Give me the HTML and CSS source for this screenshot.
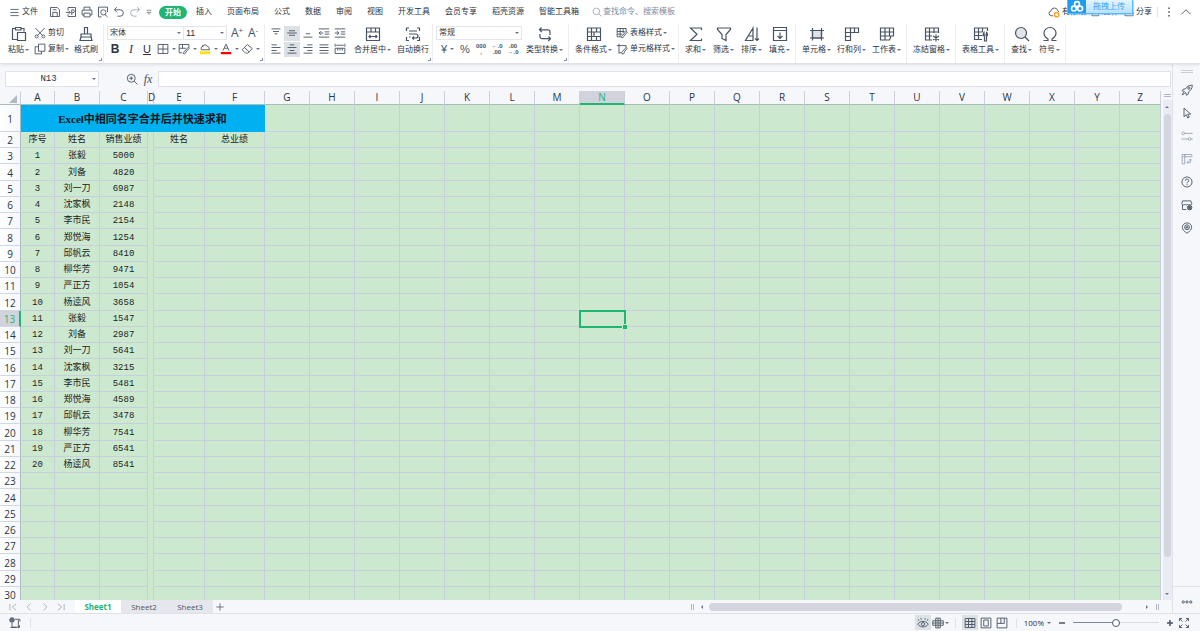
FILE: index.html
```html
<!DOCTYPE html>
<html lang="zh-CN">
<head>
<meta charset="utf-8">
<meta name="viewport" content="width=device-width, initial-scale=1">
<title>表格</title>
<link rel="stylesheet" href="styles.css">
</head>
<body>
<svg class="sprite" aria-hidden="true">
  <symbol id="i-menu" viewBox="0 0 16 16"><path d="M2 3.500h12M2 8h12M2 12.500h12"/></symbol>
  <symbol id="i-save" viewBox="0 0 16 16"><path d="M2 2h9l3 3v9H2zM5 14V8.500h6V14M5 5h5"/></symbol>
  <symbol id="i-export" viewBox="0 0 16 16"><path d="M4 6V2h10v12H4v-3M1 8.500h6M5 6.500l2 2-2 2M9 12V5h1.500a2 2 0 0 1 0 4H9"/></symbol>
  <symbol id="i-print" viewBox="0 0 16 16"><path d="M4 5.500V1.500h8v4M4 12H1.500V5.500h13V12H12M4 9.500h8v5H4z"/></symbol>
  <symbol id="i-preview" viewBox="0 0 16 16"><path d="M6 14.500H2v-13h12V8M10.500 11.500l3.500 3"/><circle cx="8.500" cy="8.500" r="3.500"/></symbol>
  <symbol id="i-undo" viewBox="0 0 16 16"><path d="M5 1.500L2 5l3.500 3.500M2 5h7.500a4.300 4.300 0 0 1 0 8.600H6"/></symbol>
  <symbol id="i-redo" viewBox="0 0 16 16"><path d="M11 1.500L14 5l-3.500 3.500M14 5H6.500a4.300 4.300 0 0 0 0 8.600H10"/></symbol>
  <symbol id="i-more" viewBox="0 0 16 16"><path d="M3 4.500h10M4 8.500l4 4 4-4z"/></symbol>
  <symbol id="i-search" viewBox="0 0 16 16"><circle cx="7" cy="7" r="5.300"/><path d="M11 11l4 4"/></symbol>
  <symbol id="i-cloud" viewBox="0 0 16 16"><path d="M7 13H4.500a3.300 3.300 0 0 1-.5-6.500 4.500 4.500 0 0 1 8.800-.5 3 3 0 0 1 1.700 2"/><circle cx="11.500" cy="11.500" r="2.800" stroke="#f5a623" stroke-width="2"/></symbol>
  <symbol id="i-collab" viewBox="0 0 16 16"><circle cx="7" cy="5" r="3"/><path d="M1.500 14c0-3 2-5 5.500-5s5.500 2 5.500 5z"/></symbol>
  <symbol id="i-share" viewBox="0 0 16 16"><path d="M4 8H1.500v6h13V8M5 10c.5-3.500 3-5 7-5M9.500 2.500L12.500 5l-3 2.500"/></symbol>
  <symbol id="i-dots" viewBox="0 0 16 16"><path d="M8 2v2M8 7v2M8 12v2" stroke-width="2"/></symbol>
  <symbol id="i-up" viewBox="0 0 16 16"><path d="M2 11l6-6 6 6"/></symbol>

  <symbol id="i-paste" viewBox="0 0 16 16"><path d="M6 13.500H1.500v-11h3M10 2.500h3v3M4.500 1.500h5.500v2.500H4.500zM6.500 6.500h8v8h-8z"/></symbol>
  <symbol id="i-cut" viewBox="0 0 16 16"><path d="M2 1.500l9.500 10M14 1.500L4.500 11.500"/><circle cx="3.500" cy="12.500" r="2"/><circle cx="12.500" cy="12.500" r="2"/></symbol>
  <symbol id="i-copy" viewBox="0 0 16 16"><path d="M6 1.500h8.500v9.500H6zM6 5H1.500v9.500H10V11"/></symbol>
  <symbol id="i-brush" viewBox="0 0 16 16"><path d="M6.500 8V1.500h3V8M3 11V8h10v3M3 11L2 14.500h12l-1-3.500M3 11h10"/></symbol>
  <symbol id="i-border" viewBox="0 0 16 16"><path d="M1.500 2h13v12h-13zM8 2v12M1.500 8h13"/></symbol>
  <symbol id="i-tstyle" viewBox="0 0 16 16"><path d="M6 13H1.500V2h12v4M1.500 6h10M1.500 9.500h7M5.500 2v11M9.500 2v6M7 14c2.500 1 3.500-.5 3.500-2L15 7l-1.500-1.200L9 11c-1.500.3-1.500 2-2 3z"/></symbol>
  <symbol id="i-pen" viewBox="0 0 16 16"><path d="M5.500 13H1.500V2h13v4M1.500 7h9M6 2v5M7 14c2.500 1 3.500-.5 3.500-2L15 7l-1.500-1.200L9 11c-1.500.3-1.500 2-2 3z"/></symbol>
  <symbol id="i-fill" viewBox="0 0 16 16"><path d="M3 9V6l5-4 5.500 4v3.500M3 9h10.500M5 5V2.500"/><path d="M1 13h14" stroke="#f5e61a" stroke-width="4"/></symbol>
  <symbol id="i-color" viewBox="0 0 16 16"><path d="M4 10l4-8.500L12 10M5.500 7h5"/><path d="M1 13.500h14" stroke="#f00" stroke-width="3"/></symbol>
  <symbol id="i-erase" viewBox="0 0 16 16"><path d="M8.500 2L15 7.500 9 13.500H6L1.500 9zM4.500 6l6.500 6"/></symbol>
  <symbol id="i-vtop" viewBox="0 0 16 16"><path d="M2 2.500h12M4 6h8M6 9h4"/></symbol>
  <symbol id="i-vmid" viewBox="0 0 16 16"><path d="M4 5h8M1.500 8h13M4 11h8"/></symbol>
  <symbol id="i-vbot" viewBox="0 0 16 16"><path d="M5 9h6M2 13.500h12"/></symbol>
  <symbol id="i-outdent" viewBox="0 0 16 16"><path d="M1 2.500h14M9 6.500h6M9 9.500h6M1 13.500h14M7 8H1.500M4 5.500L1.500 8 4 10.500"/></symbol>
  <symbol id="i-indent" viewBox="0 0 16 16"><path d="M1 2.500h14M9 6.500h6M9 9.500h6M1 13.500h14M1 8h5.500M4 5.500L6.500 8 4 10.500"/></symbol>
  <symbol id="i-left" viewBox="0 0 16 16"><path d="M2 2.500h7M2 6h12M2 10h7M2 13.500h12"/></symbol>
  <symbol id="i-center" viewBox="0 0 16 16"><path d="M5 2.500h6M2 6h12M5 10h6M2 13.500h12"/></symbol>
  <symbol id="i-right" viewBox="0 0 16 16"><path d="M7 2.500h7M2 6h12M7 10h7M2 13.500h12"/></symbol>
  <symbol id="i-just" viewBox="0 0 16 16"><path d="M2 2.500h12M2 6h12M2 10h12M2 13.500h12"/></symbol>
  <symbol id="i-dist" viewBox="0 0 16 16"><path d="M1.500 1v4M14.500 1v4M3 3h10M1.500 7h13v7h-13zM5 7v3M8 7v3M11 7v3"/></symbol>
  <symbol id="i-merge" viewBox="0 0 16 16"><path d="M1.500 2h13v12.500h-13zM1.500 6h13M6 2v4M10.500 2v4M4 10.500h8M5.500 9L4 10.500 5.500 12M10.500 9l1.500 1.500-1.500 1.500"/></symbol>
  <symbol id="i-wrap" viewBox="0 0 16 16"><path d="M1.500 5V2H4M12 2h2.500v3M1.500 11v3.500H4M12 14.500h2.500V11M4 5h8M4 8h7a2 2 0 0 1 0 4H7.500M9 10.500L7.500 12 9 13.500M4 11h1.500"/></symbol>
  <symbol id="i-convert" viewBox="0 0 16 16"><path d="M4.500 1.500L2.500 3.800 4.800 6M2.500 3.800H11a2 2 0 0 1 2 2V9M11.500 10.500l2 2.200-2.300 2.300M13.500 12.700H5a2 2 0 0 1-2-2V8"/></symbol>
  <symbol id="i-cond" viewBox="0 0 16 16"><path d="M1.500 2h13v12.500h-13zM1.500 6h13M1.500 10.500h13M5.500 2v12.500M10.500 2v4M10.500 10.500v4M8 6v4.500"/></symbol>
  <symbol id="i-cstyle" viewBox="0 0 16 16"><path d="M4 1v13M1 3.500h13M4 13h3M13 3.500v2M8 14.500c2.500.5 3.500-1 3-2.500L15 7l-1.500-1.200L9 11c-1.500.5-1.500 2-1 3.500z"/></symbol>
  <symbol id="i-sum" viewBox="0 0 16 16"><path d="M13.500 4V2H2.500L9 8.300 2.500 14.500h11v-2"/></symbol>
  <symbol id="i-filter" viewBox="0 0 16 16"><path d="M1.500 2h13v1.500L10 8.500v6L6 12.500v-4L1.500 3.500z"/></symbol>
  <symbol id="i-sort" viewBox="0 0 16 16"><path d="M9 2L1.500 14.500H9zM4.500 10H9M13 1.500v13M11 12.500l2 2 2-2"/></symbol>
  <symbol id="i-down" viewBox="0 0 16 16"><path d="M1.500 1.500h13v13h-13zM1.500 4.500h13M8 6.500v6M5.500 10L8 12.500l2.500-2.500"/></symbol>
  <symbol id="i-cell" viewBox="0 0 16 16"><path d="M3.500 4.500h9v7.500h-9z" fill="#dfe3e8"/><path d="M1 4.500h14M1 12h14M3.500 2v12.500M12.500 2v12.500"/></symbol>
  <symbol id="i-rowcol" viewBox="0 0 16 16"><path d="M1.500 2h13v4.500h-8v8h-5zM6.500 2v4.500M10.500 2v4.500M1.500 6.500h5M1.500 10.500h5"/></symbol>
  <symbol id="i-sheet" viewBox="0 0 16 16"><path d="M1.500 2h13v8H12l-1.500 4H1.500zM1.500 6h13M1.500 10H12M6 2v12M10.500 2v8"/></symbol>
  <symbol id="i-freeze" viewBox="0 0 16 16"><path d="M8 14H1.500V2h13v5M1.500 6h13M1.500 10H8M5.500 2v12M10 2v5M12 8.500v7M9 10l6 4M15 10l-6 4"/></symbol>
  <symbol id="i-tool" viewBox="0 0 16 16"><path d="M9 13.500H1.500V2h13v3M1.500 6h8M1.500 9.500h8M5.500 2v11.500M9.500 2v4M11.500 15v-4.500a2.500 2.500 0 0 1-.5-4v2.500h2.500V6.500a2.500 2.500 0 0 1 0 4V15z"/></symbol>
  <symbol id="i-find" viewBox="0 0 16 16"><circle cx="7" cy="7" r="5.500" fill="#e1e5ea"/><path d="M11 11l4 4"/></symbol>
  <symbol id="i-omega" viewBox="0 0 16 16"><path d="M1.500 14.500h4.500v-1.500C3.500 11.500 2 10 2 7a6 5.500 0 0 1 12 0c0 3-1.500 4.500-4 6v1.500h4.500"/></symbol>
  <symbol id="i-zoomin" viewBox="0 0 16 16"><circle cx="7" cy="7" r="5.300"/><path d="M11 11l4 4M4.500 7h5M7 4.500v5"/></symbol>

  <symbol id="i-rocket" viewBox="0 0 16 16"><path d="M15 1.500c-5 0-7 2-9 5L3 7 1.500 9l3 1 2 2 1 3L9.500 13.500l.5-3c3-2 5-4 5-9zM3.500 11l-2 3.500 3.500-2"/><circle cx="10.500" cy="5.500" r="1.500"/></symbol>
  <symbol id="i-cursor" viewBox="0 0 16 16"><path d="M4 1.500v11.500l3-2.800 2 4.500 2-1-2-4.200h4z"/></symbol>
  <symbol id="i-sliders" viewBox="0 0 16 16"><circle cx="3" cy="4.500" r="1.800"/><circle cx="11.500" cy="12" r="1.800"/><path d="M5 4.500h10.500M.5 12h9M13.500 12h2"/></symbol>
  <symbol id="i-trans" viewBox="0 0 16 16"><path d="M1.500 2h3.500v3H1.500zM5 2h9.500v3H5zM1.500 5v9.500H5V5M8.500 12.500h4V8M10.500 10l2-2 2 2M10 10.500l-2 2 2 2"/></symbol>
  <symbol id="i-help" viewBox="0 0 16 16"><circle cx="8" cy="8" r="6.700"/><path d="M5.800 6.300a2.200 2.200 0 1 1 3 2c-.6.300-.8.700-.8 1.500M8 11v1.300"/></symbol>
  <symbol id="i-shop" viewBox="0 0 16 16"><path d="M7 14H2V8M2 2.500h11l1.500 4c-1 2-2.500 1.500-3 .5-1 1.500-2.500 1.500-3 0-1 1.500-2.500 1.500-3.200 0C4 8.500 2 8 1 6.500z"/><circle cx="11.500" cy="11.500" r="3" fill="#7b8696"/><path d="M11.500 10v3M10 11.500h3"/></symbol>
  <symbol id="i-pin" viewBox="0 0 16 16"><path d="M8 15C4 12 1.800 10 1.800 7a6.200 5.800 0 0 1 12.400 0c0 3-2.200 5-6.200 8z"/><circle cx="8" cy="7" r="3.200"/><path d="M8 5v4M6 7h4"/></symbol>
  <symbol id="i-ellipsis" viewBox="0 0 16 16"><circle cx="3" cy="8" r="1.500"/><circle cx="8" cy="8" r="1.500"/><circle cx="13" cy="8" r="1.500"/></symbol>

  <symbol id="i-first" viewBox="0 0 16 16"><path d="M3 3v10M13 3L7 8l6 5"/></symbol>
  <symbol id="i-prev" viewBox="0 0 16 16"><path d="M10.500 2.500L5 8l5.500 5.500"/></symbol>
  <symbol id="i-next" viewBox="0 0 16 16"><path d="M5.500 2.500L11 8l-5.500 5.500"/></symbol>
  <symbol id="i-last" viewBox="0 0 16 16"><path d="M13 3v10M3 3l6 5-6 5"/></symbol>
  <symbol id="i-plus" viewBox="0 0 16 16"><path d="M8 2v12M2 8h12"/></symbol>
  <symbol id="i-minus" viewBox="0 0 16 16"><path d="M2 8h12"/></symbol>
  <symbol id="i-macro" viewBox="0 0 16 16"><path d="M8 3h6.500v3M12.500 4v9.500H4V8M2 14h8M14 11v3h-2"/><circle cx="4" cy="4" r="3" fill="#6a7585"/></symbol>
  <symbol id="i-eye" viewBox="0 0 16 16"><path d="M1 9.500c3.500-5 10.500-5 14 0-3.500 5-10.500 5-14 0zM2.500 5L1.500 3M5.500 3.500L5 1.500M10.500 3.500l.5-2M13.500 5l1-2"/><circle cx="8" cy="9.500" r="2.200"/></symbol>
  <symbol id="i-cross" viewBox="0 0 16 16"><path d="M1 5h14v6H1zM5 1.500h6v13H5zM8 1.500v13M1 8h14"/></symbol>
  <symbol id="i-grid" viewBox="0 0 16 16"><path d="M1.500 2h13v12h-13zM1.500 6h13M1.500 10h13M6 2v12M10.500 2v12"/></symbol>
  <symbol id="i-page" viewBox="0 0 16 16"><path d="M1.500 1.500h13v13h-13zM5 4h6v8H5z"/></symbol>
  <symbol id="i-break" viewBox="0 0 16 16"><path d="M1.500 1.500h13v13h-13zM1.500 8.500H11V1.500M6.500 8.500v-7"/></symbol>
  <symbol id="i-full" viewBox="0 0 16 16"><path d="M2 5.500V2h3.500M2 2l4 4M10.500 2H14v3.500M14 2l-4 4M2 10.500V14h3.500M2 14l4-4M14 10.500V14h-3.500M14 14l-4-4"/></symbol>
  <symbol id="i-pan" viewBox="0 0 16 16"><circle cx="8" cy="5" r="3"/><circle cx="4.200" cy="10.500" r="3"/><circle cx="11.800" cy="10.500" r="3"/></symbol>
</svg>

<header class="chrome">
  <nav class="menubar" aria-label="菜单">
    <button class="file"><svg class="ic s11"><use href="#i-menu"/></svg>文件</button>
    <div class="quick">
      <button aria-label="保存"><svg class="ic s12"><use href="#i-save"/></svg></button>
      <button aria-label="输出"><svg class="ic s12"><use href="#i-export"/></svg></button>
      <button aria-label="打印"><svg class="ic s12"><use href="#i-print"/></svg></button>
      <button aria-label="打印预览"><svg class="ic s12"><use href="#i-preview"/></svg></button>
      <button aria-label="撤销"><svg class="ic s12"><use href="#i-undo"/></svg></button>
      <button aria-label="恢复" class="faint"><svg class="ic s12"><use href="#i-redo"/></svg></button>
      <button aria-label="更多"><svg class="ic s8"><use href="#i-more"/></svg></button>
    </div>
    <button class="pill">开始</button>
    <div class="tabs">
      <button>插入</button><button>页面布局</button><button>公式</button><button>数据</button><button>审阅</button><button>视图</button><button>开发工具</button><button>会员专享</button><button>稻壳资源</button><button>智能工具箱</button>
    </div>
    <label class="search"><svg class="ic s10"><use href="#i-search"/></svg><input type="text" placeholder="查找命令、搜索模板" aria-label="查找命令"></label>
    <div class="account">
      <button><svg class="ic s12"><use href="#i-cloud"/></svg>有修改</button>
      <button><svg class="ic s10"><use href="#i-collab"/></svg>协作</button>
      <button><svg class="ic s10"><use href="#i-share"/></svg>分享</button>
      <span class="bar"></span>
      <button aria-label="选项"><svg class="ic s12"><use href="#i-dots"/></svg></button>
      <button aria-label="收起功能区"><svg class="ic s12"><use href="#i-up"/></svg></button>
    </div>
    <button class="upload"><span class="upload-logo"><svg class="ic s16"><use href="#i-pan"/></svg></span><span class="upload-text">拖拽上传</span></button>
  </nav>

  <div class="ribbon">
    <section class="group clip">
      <button class="big"><svg class="ic s16"><use href="#i-paste"/></svg><span class="caret">粘贴</span></button>
      <div class="stack">
        <button class="small"><svg class="ic s12"><use href="#i-cut"/></svg>剪切</button>
        <button class="small"><svg class="ic s12"><use href="#i-copy"/></svg><span class="caret">复制</span></button>
      </div>
      <button class="big"><svg class="ic s16"><use href="#i-brush"/></svg><span>格式刷</span></button>
      <i class="launch"></i>
    </section>
    <section class="group tight">
      <div class="stack">
        <div class="line">
          <span class="pick font"><select aria-label="字体"><option>宋体</option></select></span>
          <span class="pick size"><select aria-label="字号"><option>11</option></select></span>
          <span class="after"><button class="tool letter" aria-label="增大字号">A<sup>+</sup></button><button class="tool letter" aria-label="减小字号">A<sup>-</sup></button></span>
        </div>
        <div class="line">
          <button class="tool bold">B</button><button class="tool ital">I</button><button class="tool under">U</button>
          <button class="tool caret" aria-label="边框"><svg class="ic s12"><use href="#i-border"/></svg></button>
          <button class="tool caret" aria-label="单元格样式"><svg class="ic s12"><use href="#i-pen"/></svg></button>
          <button class="tool caret" aria-label="填充颜色"><svg class="ic s12"><use href="#i-fill"/></svg></button>
          <button class="tool caret" aria-label="字体颜色"><svg class="ic s12"><use href="#i-color"/></svg></button>
          <button class="tool caret" aria-label="清除"><svg class="ic s12"><use href="#i-erase"/></svg></button>
        </div>
      </div>
      <i class="launch"></i>
    </section>
    <section class="group tight align">
      <div class="stack">
        <div class="line">
          <button class="tool" aria-label="顶端对齐"><svg class="ic s12"><use href="#i-vtop"/></svg></button><button class="tool on" aria-label="垂直居中"><svg class="ic s12"><use href="#i-vmid"/></svg></button><button class="tool" aria-label="底端对齐"><svg class="ic s12"><use href="#i-vbot"/></svg></button><button class="tool" aria-label="减少缩进"><svg class="ic s12"><use href="#i-outdent"/></svg></button><button class="tool" aria-label="增加缩进"><svg class="ic s12"><use href="#i-indent"/></svg></button>
        </div>
        <div class="line">
          <button class="tool" aria-label="左对齐"><svg class="ic s12"><use href="#i-left"/></svg></button><button class="tool on" aria-label="居中"><svg class="ic s12"><use href="#i-center"/></svg></button><button class="tool" aria-label="右对齐"><svg class="ic s12"><use href="#i-right"/></svg></button><button class="tool" aria-label="两端对齐"><svg class="ic s12"><use href="#i-just"/></svg></button><button class="tool" aria-label="分散对齐"><svg class="ic s12"><use href="#i-dist"/></svg></button>
        </div>
      </div>
      <button class="big"><svg class="ic s16"><use href="#i-merge"/></svg><span class="caret">合并居中</span></button>
      <button class="big"><svg class="ic s16"><use href="#i-wrap"/></svg><span>自动换行</span></button>
      <i class="launch"></i>
    </section>
    <section class="group tight number">
      <div class="stack">
        <div class="line"><span class="pick format"><select aria-label="数字格式"><option>常规</option></select></span></div>
        <div class="line">
          <button class="tool caret yen">¥</button><button class="tool yen">%</button><button class="tool digits"><span>000<br>,</span></button><button class="tool digits"><span>←.0<br>.00</span></button><button class="tool digits"><span>.00<br>→.0</span></button>
        </div>
      </div>
      <button class="big"><svg class="ic s16"><use href="#i-convert"/></svg><span class="caret">类型转换</span></button>
      <i class="launch"></i>
    </section>
    <section class="group styles">
      <button class="big"><svg class="ic s16"><use href="#i-cond"/></svg><span class="caret">条件格式</span></button>
      <div class="stack">
        <button class="small"><svg class="ic s12"><use href="#i-tstyle"/></svg><span class="caret">表格样式</span></button>
        <button class="small"><svg class="ic s12"><use href="#i-cstyle"/></svg><span class="caret">单元格样式</span></button>
      </div>
    </section>
    <section class="group wide">
      <button class="big"><svg class="ic s16"><use href="#i-sum"/></svg><span class="caret">求和</span></button>
      <button class="big"><svg class="ic s16"><use href="#i-filter"/></svg><span class="caret">筛选</span></button>
      <button class="big"><svg class="ic s16"><use href="#i-sort"/></svg><span class="caret">排序</span></button>
      <button class="big"><svg class="ic s16"><use href="#i-down"/></svg><span class="caret">填充</span></button>
    </section>
    <section class="group">
      <button class="big"><svg class="ic s16"><use href="#i-cell"/></svg><span class="caret">单元格</span></button>
      <button class="big"><svg class="ic s16"><use href="#i-rowcol"/></svg><span class="caret">行和列</span></button>
      <button class="big"><svg class="ic s16"><use href="#i-sheet"/></svg><span class="caret">工作表</span></button>
    </section>
    <section class="group">
      <button class="big"><svg class="ic s16"><use href="#i-freeze"/></svg><span class="caret">冻结窗格</span></button>
    </section>
    <section class="group">
      <button class="big"><svg class="ic s16"><use href="#i-tool"/></svg><span class="caret">表格工具</span></button>
    </section>
    <section class="group wide">
      <button class="big"><svg class="ic s16"><use href="#i-find"/></svg><span class="caret">查找</span></button>
      <button class="big"><svg class="ic s16"><use href="#i-omega"/></svg><span class="caret">符号</span></button>
    </section>
  </div>
</header>

<div class="body">
  <main class="work">
    <div class="formula">
      <span class="namebox"><input type="text" value="N13" aria-label="名称框"></span>
      <button class="lens" aria-label="放大"><svg class="ic s12"><use href="#i-zoomin"/></svg></button>
      <button class="fx">fx</button>
      <input class="expr" type="text" aria-label="编辑栏">
    </div>
    <div class="view">
      <div class="cells"><table class="sheet" id="sheet"></table></div>
      <div class="vscroll"><span class="grip"></span><i class="tri up"></i><span class="thumb"></span><i class="tri down"></i></div>
    </div>
    <div class="sheetbar">
      <div class="nav">
        <button aria-label="第一个"><svg class="ic s10"><use href="#i-first"/></svg></button><button aria-label="上一个"><svg class="ic s10"><use href="#i-prev"/></svg></button><button aria-label="下一个"><svg class="ic s10"><use href="#i-next"/></svg></button><button aria-label="最后一个"><svg class="ic s10"><use href="#i-last"/></svg></button>
      </div>
      <button class="stab current">Sheet1</button><button class="stab">Sheet2</button><button class="stab">Sheet3</button>
      <button class="add" aria-label="新建工作表"><svg class="ic s10"><use href="#i-plus"/></svg></button>
      <div class="hscroll"><span class="grip"></span><i class="tri left"></i><span class="thumb"></span><i class="tri right"></i><span class="grip"></span></div>
    </div>
  </main>
  <aside class="side">
    <span class="handle"></span>
    <button aria-label="快捷"><svg class="ic s12"><use href="#i-rocket"/></svg></button>
    <button aria-label="选择"><svg class="ic s12"><use href="#i-cursor"/></svg></button>
    <button aria-label="属性" class="faint"><svg class="ic s12"><use href="#i-sliders"/></svg></button>
    <button aria-label="转换" class="faint"><svg class="ic s12"><use href="#i-trans"/></svg></button>
    <button aria-label="帮助"><svg class="ic s12"><use href="#i-help"/></svg></button>
    <button aria-label="素材"><svg class="ic s12"><use href="#i-shop"/></svg></button>
    <button aria-label="定位"><svg class="ic s12"><use href="#i-pin"/></svg></button>
    <button aria-label="更多" class="last"><svg class="ic s12"><use href="#i-ellipsis"/></svg></button>
  </aside>
</div>

<footer class="status">
  <button aria-label="宏"><svg class="ic s12"><use href="#i-macro"/></svg></button>
  <span class="bar"></span>
  <div class="tools">
    <button class="on" aria-label="护眼模式"><svg class="ic s12"><use href="#i-eye"/></svg></button>
    <button class="caret" aria-label="阅读模式"><svg class="ic s12"><use href="#i-cross"/></svg></button>
    <span class="bar"></span>
    <button class="on" aria-label="普通视图"><svg class="ic s12"><use href="#i-grid"/></svg></button>
    <button aria-label="页面布局"><svg class="ic s12"><use href="#i-page"/></svg></button>
    <button aria-label="分页预览"><svg class="ic s12"><use href="#i-break"/></svg></button>
    <span class="bar"></span>
    <button class="caret percent">100%</button>
    <button class="strong" aria-label="缩小"><svg class="ic s8"><use href="#i-minus"/></svg></button>
    <input class="zoom" type="range" min="0" max="100" value="50" aria-label="缩放">
    <button class="strong" aria-label="放大"><svg class="ic s8"><use href="#i-plus"/></svg></button>
    <button aria-label="全屏"><svg class="ic s12"><use href="#i-full"/></svg></button>
  </div>
</footer>
<script src="sheet.js"></script>
</body>
</html>
```
FILE: styles.css
```css
* { box-sizing: border-box; }

:root {
  --ink: #485363;
  --text: #2b3440;
  --green: #1fb573;
  --panel: #f5f7fa;
  --line: #dfe2e8;
  --grid: #c6d0dc;
  --ui: "Liberation Sans", "Noto Sans CJK SC", sans-serif;
}

body {
  margin: 0;
  height: 100vh;
  display: flex;
  flex-direction: column;
  overflow: hidden;
  background: var(--panel);
  color: var(--text);
  font: 8px/12px var(--ui);
}

button, input, select {
  margin: 0;
  padding: 0;
  border: 0;
  background: none;
  color: inherit;
  font: inherit;
  appearance: none;
  outline: none;
}
button { white-space: nowrap; }

.sprite { position: absolute; width: 0; height: 0; }
.ic { display: block; flex: none; fill: none; stroke: var(--ink); stroke-width: 1.2; }
.s8 { width: 8px; height: 8px; }
.s10 { width: 10px; height: 10px; }
.s11 { width: 11px; height: 11px; }
.s12 { width: 12px; height: 12px; }
.s16 { width: 16px; height: 16px; }
.faint .ic { stroke: #9aa6b5; }
.bar { width: 1px; height: 10px; background: var(--line); }

.caret::after, .pick::after, .namebox::after {
  content: "";
  display: inline-block;
  flex: none;
  margin-left: 1px;
  border: 2px solid transparent;
  border-top-color: #66758a;
  border-bottom: 0;
  width: 0;
  vertical-align: middle;
}

/* menu bar */
.chrome { flex: none; background: #fff; border-bottom: 1px solid var(--line); box-shadow: 0 1px 3px #0000001a; z-index: 1; }
.menubar { position: relative; display: flex; align-items: center; height: 24px; padding-left: 9px; }
.file { display: flex; align-items: center; gap: 2px; margin-right: 11px; }
.quick { display: flex; align-items: center; gap: 4px; margin-right: 6px; }
.pill { width: 28px; height: 13px; border-radius: 7px; background: var(--green); color: #fff; font-weight: bold; line-height: 13px; }
.tabs { display: flex; gap: 15px; margin-left: 9px; }
.search { display: flex; align-items: center; margin-left: 13px; gap: 1px; }
.search .ic { stroke: #8c98a8; }
.search input { width: 80px; height: 12px; }
.search input::placeholder { color: #7f8b9c; opacity: 1; }
.account { display: flex; align-items: center; gap: 5px; margin-left: auto; padding-right: 8px; }
.account button { display: flex; align-items: center; gap: 2px; }
.upload {
  position: absolute;
  top: 0;
  right: 67px;
  display: flex;
  height: 14px;
  border: 1px solid #5db8fb;
  border-top: 0;
  background: linear-gradient(#e3f4ff, #b9e2ff);
  color: #3ea4ef;
  box-shadow: 1px 1px 1px #5db8fb80;
}
.upload-logo { display: grid; place-items: center; width: 18px; height: 13px; background: #1e9bf5; }
.upload-logo .ic { stroke: #fff; stroke-width: 2; height: 13px; }
.upload-text { padding: 0 7px; line-height: 13px; }

/* ribbon */
.ribbon { display: flex; height: 39px; }
.group { position: relative; display: flex; gap: 6px; padding: 1px 5px 1px 6px; border-right: 1px solid #eceef2; }
.group.clip { padding-left: 8px; gap: 5px; }
.group.tight { padding-left: 3px; padding-right: 3px; }
.group.number { gap: 4px; padding-right: 5px; }
.group.styles { padding-right: 3px; gap: 4px; }
.group.wide { gap: 7px; }
.big { display: flex; flex-direction: column; align-items: center; gap: 2px; padding-top: 1px; height: 34px; }
.big span { line-height: 12px; }
.stack { display: flex; flex-direction: column; gap: 1px; }
.line { display: flex; align-items: center; height: 14px; margin-top: 1px; }
.small { display: flex; align-items: center; gap: 2px; height: 14px; margin-top: 1px; }
.launch { position: absolute; right: 1px; bottom: 2px; width: 3px; height: 3px; border: solid #8793a5; border-width: 0 1px 1px 0; }
.tool { display: flex; align-items: center; width: 16px; height: 15px; justify-content: center; }
.tool.caret { width: 21px; padding-left: 2px; justify-content: flex-start; }
.tool.caret::after { margin-left: 3px; }
.tool.on, .status .on { background: #dce1e6; }
.after { display: flex; margin-left: 2px; }
.letter { font: 12px/14px "Open Sans", sans-serif; color: var(--ink); }
.letter sup { font-size: 8px; line-height: 8px; align-self: flex-start; }
.bold { font: bold 12px/14px "Liberation Sans", sans-serif; }
.ital { font: italic 12px/14px "Liberation Serif", serif; }
.under { font: 11px/14px "Liberation Sans", sans-serif; text-decoration: underline; }
.yen { font: 11px/14px "Liberation Sans", sans-serif; color: var(--ink); }
.tool.yen.caret { padding-left: 5px; }
.digits { font: bold 6px/6px "Liberation Sans", sans-serif; color: var(--ink); }
.pick { display: flex; align-items: center; height: 14px; padding-right: 2px; border: 1px solid #e3e6eb; background: #fff; }
.pick select { flex: 1; width: 0; padding-left: 2px; height: 12px; }
.pick.font { width: 77px; margin-right: -1px; }
.pick.size { width: 44px; font-size: 9px; }
.pick.format { width: 86px; }

/* work area */
.body { flex: 1; display: flex; min-height: 0; }
.work { flex: 1; min-width: 0; display: flex; flex-direction: column; }
.formula { flex: none; display: flex; align-items: center; height: 27px; padding: 2px 1px 0 5px; }
.namebox { display: flex; align-items: center; width: 94px; height: 16px; padding-right: 2px; background: #fff; border: 1px solid var(--line); }
.namebox input { flex: 1; width: 0; text-align: center; font: 9px/14px "Liberation Mono", monospace; }
.lens { margin-left: 27px; }
.fx { width: 20px; font: italic 12px/14px "Liberation Serif", serif; color: var(--ink); }
.expr { flex: 1; height: 16px; background: #fff; border: 1px solid var(--line); }

.view { flex: 1; display: flex; min-height: 0; }
.cells { flex: 1; min-width: 0; overflow: hidden; }
.sheet { width: 100%; table-layout: fixed; border-collapse: separate; border-spacing: 0; font: 9px/13px "Liberation Mono", "Noto Sans CJK SC", monospace; color: #1c241f; }
.sheet th, .sheet td { padding: 0; text-align: center; vertical-align: middle; white-space: nowrap; }
.sheet th { font: 10px/13px "Open Sans", sans-serif; color: #2c3642; background: var(--panel); }
.sheet thead th { height: 14px; border-right: 1px solid #ccd2dd; border-bottom: 1px solid #a9bdb8; }
.sheet thead .active { background: #d0d3db; color: var(--green); border-bottom: 2px solid var(--green); line-height: 12px; }
.sheet tbody th, .sheet tbody td { padding-top: 2px; }
.sheet tbody th { border-right: 1px solid #a9bcc4; border-bottom: 1px solid #cfd8e2; background: linear-gradient(90deg, #fff, var(--panel)); }
.sheet tbody .active { background: #d0d3db; color: var(--green); border-right: 2px solid var(--green); }
.sheet tbody tr { height: 16px; }
.sheet tbody tr:nth-child(4n) { height: 17px; }
.sheet tbody tr:first-child { height: 27px; }
.sheet td { background: #cce8cf; border-right: 1px solid var(--grid); border-bottom: 1px solid var(--grid); }
.sheet .gap { border-bottom-color: #cce8cf; }
.sheet .title { background: #00b0f0; border-color: #00b0f0; color: #0b1720; font: bold 11px/16px "Liberation Serif", "Noto Sans CJK SC", serif; }
.sheet .selected { position: relative; }
.cursor { position: absolute; inset: -1px -2px -2px -1px; border: 2px solid var(--green); }
.cursor::after { content: ""; position: absolute; right: -3px; bottom: -3px; width: 4px; height: 4px; background: var(--green); outline: 1px solid #cce8cf; }
.corner::after { content: ""; display: block; margin: 3px 3px 0 auto; width: 0; border: 4px solid transparent; border-right-color: #b4bac3; border-bottom-color: #b4bac3; }
.c-head { width: 21px; } .c-a { width: 34px; } .c-b { width: 45px; } .c-c { width: 48px; }
.c-d { width: 6px; } .c-e { width: 51px; } .c-f { width: 60px; }

.tri { flex: none; width: 0; height: 0; border: 2px solid transparent; }
.tri.up { border-bottom-color: #66758a; border-top: 0; }
.tri.down { border-top-color: #66758a; border-bottom: 0; }
.tri.left { border-right-color: #66758a; border-left: 0; }
.tri.right { border-left-color: #66758a; border-right: 0; }
.vscroll { flex: none; display: flex; flex-direction: column; align-items: center; width: 11px; padding: 3px 0 5px 1px; background: linear-gradient(#e9ecf2, #e9ecf2) 2px 9px no-repeat; }
.vscroll .grip { width: 7px; height: 3px; margin-bottom: 9px; border: solid #aeb8c6; border-width: 1px 0; }
.vscroll .thumb { width: 7px; flex: 1; margin: 6px 0 36px; border-radius: 4px; background: #d3d6df; }

/* sheet tabs */
.sheetbar { flex: none; display: flex; align-items: center; height: 14px; border-bottom: 1px solid var(--line); font: 8px/13px "Open Sans", sans-serif; color: #4b5666; }
.nav { display: flex; gap: 6px; padding: 0 9px 0 8px; }
.nav .ic { stroke: #98a2b0; }
.stab { width: 46px; height: 13px; background: #e6e7ed; }
.stab.current { background: #fff; color: var(--green); font-weight: bold; }
.add { margin-left: 2px; }
.hscroll { display: flex; align-items: center; width: 41%; margin-left: auto; padding-right: 13px; }
.hscroll .grip { width: 3px; height: 6px; border: solid #aeb8c6; border-width: 0 1px; }
.hscroll .thumb { flex: 1; height: 8px; margin: 0 24px 0 6px; border-radius: 4px; background: #d3d6df; }
.hscroll .left { margin-left: 7px; }
.hscroll .right { margin-right: 8px; }

/* side panel */
.side { flex: none; display: flex; flex-direction: column; align-items: center; gap: 11px; width: 28px; padding-top: 6px; border-left: 1px solid var(--line); border-bottom: 1px solid var(--line); }
.handle { width: 12px; height: 3px; border: solid #c9cfd8; border-width: 1px 0; }
.side .last { margin-top: auto; width: 100%; display: grid; justify-items: center; padding: 9px 0 5px; border-top: 1px solid var(--line); }

/* status bar */
.status { flex: none; display: flex; align-items: center; justify-content: space-between; height: 17px; padding: 0 8px 0 9px; }
.status > .bar { margin: 0 auto 0 9px; }
.status button { display: flex; align-items: center; }
.tools { display: flex; align-items: center; }
.tools > button { height: 15px; padding: 0 2px; }
.tools .bar { margin: 0 6px; }
.tools > button.caret { padding: 0 0 0 1px; }
.tools > button.percent { font: 8px/14px "Open Sans", sans-serif; margin-right: 5px; }
.percent::after { margin-left: 3px; }
.tools .strong .ic { stroke-width: 3; }
.zoom { width: 86px; height: 10px; margin: 0 5px; background: linear-gradient(90deg, #7d8797 50%, #d8dce3 50%) center / 100% 1px no-repeat; }
.zoom::-webkit-slider-thumb { appearance: none; width: 8px; height: 8px; border: 1px solid #4d5868; border-radius: 50%; background: #fff; }
```
FILE: sheet.js
```js
const people = [
  ["张毅", 5000], ["刘备", 4820], ["刘一刀", 6987], ["沈家枫", 2148], ["李市民", 2154],
  ["郑悦海", 1254], ["邱帆云", 8410], ["柳华芳", 9471], ["严正方", 1054], ["杨逵风", 3658],
  ["张毅", 1547], ["刘备", 2987], ["刘一刀", 5641], ["沈家枫", 3215], ["李市民", 5481],
  ["郑悦海", 4589], ["邱帆云", 3478], ["柳华芳", 7541], ["严正方", 6541], ["杨逵风", 8541]
];
const letters = [..."ABCDEFGHIJKLMNOPQRSTUVWXYZ"];
const rowCount = 30;
const active = { column: "N", row: 13 };

// Columns A to F have their own widths, G to Y share one, Z takes the rest.
const cols = ["head", "a", "b", "c", "d", "e", "f"].map(n => `<col class="c-${n}">`).join("")
  + '<col class="c-b">'.repeat(19) + "<col>";

const head = letters
  .map(l => `<th scope="col"${l === active.column ? ' class="active"' : ""}>${l}</th>`)
  .join("");

function value(row, letter) {
  if (row === 2) {
    return { A: "序号", B: "姓名", C: "销售业绩", E: "姓名", F: "总业绩" }[letter] || "";
  }
  const person = people[row - 3];
  return person ? { A: row - 2, B: person[0], C: person[1] }[letter] || "" : "";
}

let body = "";
for (let row = 1; row <= rowCount; row++) {
  body += `<tr><th scope="row"${row === active.row ? ' class="active"' : ""}>${row}</th>`;
  if (row === 1) body += '<td class="title" colspan="6">Excel中相同名字合并后并快速求和</td>';
  for (const letter of row === 1 ? letters.slice(6) : letters) {
    if (row === active.row && letter === active.column) {
      body += '<td class="selected"><div class="cursor"></div></td>';
    } else {
      body += `<td${letter === "D" ? ' class="gap"' : ""}>${value(row, letter)}</td>`;
    }
  }
  body += "</tr>";
}

document.getElementById("sheet").innerHTML =
  `<colgroup>${cols}</colgroup><thead><tr><th class="corner"></th>${head}</tr></thead><tbody>${body}</tbody>`;
```
